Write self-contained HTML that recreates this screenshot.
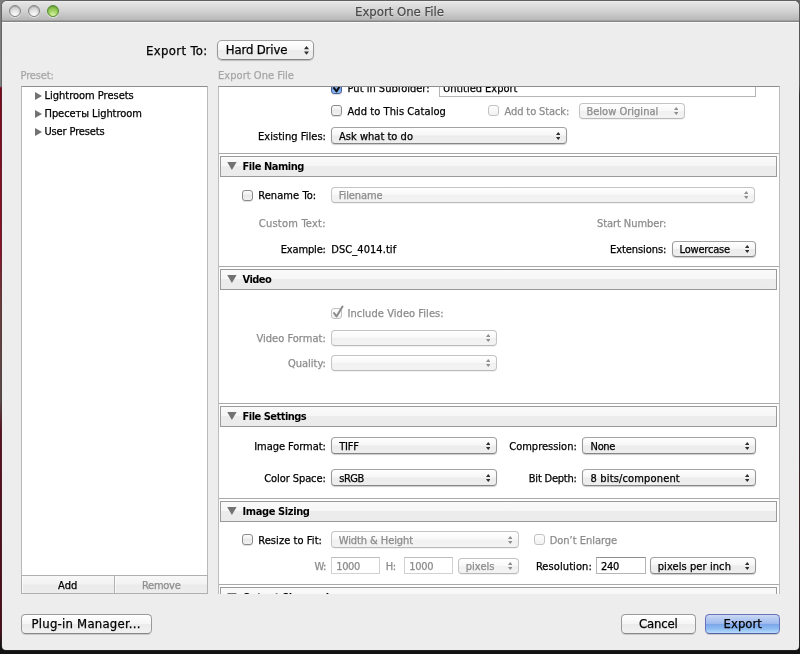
<!DOCTYPE html>
<html lang="en"><head><meta charset="utf-8"><title>Export One File</title>
<style>
html,body{margin:0;padding:0}
body{width:800px;height:654px;overflow:hidden;position:relative;background:#242022;font-family:"DejaVu Sans Condensed","Liberation Sans",sans-serif;font-size:11px}
#bgl{position:absolute;left:0;top:0;width:4px;height:654px;background:linear-gradient(180deg,#7c7c7c 0px,#808080 86px,#7a0a1e 88px,#86122a 250px,#6a3a3a 300px,#5a4a48 400px,#5c1020 430px,#4a0c18 630px,#141414 646px)}
#bgb{position:absolute;left:0;top:646px;width:800px;height:8px;background:#121212}
#bgr{position:absolute;left:796px;top:0;width:4px;height:654px;background:linear-gradient(180deg,#666 0px,#6a6a6a 85px,#2c2626 95px,#2a2424 400px,#3a1418 500px,#1a1414 646px)}
#bgt{position:absolute;left:0;top:0;width:800px;height:3px;background:#747474}
#win{position:absolute;left:2px;top:1px;width:796.5px;height:649px;background:#ededed;border-radius:5px 5px 4px 4px;overflow:hidden;box-shadow:0 0 0 1px rgba(60,60,60,.35)}
#tb{position:absolute;left:0;top:0;width:798px;height:21px;background:linear-gradient(180deg,#f0f0f0 0px,#e4e4e4 1.5px,#d2d2d2 10px,#b7b7b7 19px,#a0a0a0 19px,#a0a0a0 20px,#868686 20px,#868686 21px)}
#tbw{position:absolute;left:0;top:21px;width:798px;height:1px;background:#fafafa}
.tl{position:absolute;top:4px;width:12px;height:12px;border-radius:50%;box-sizing:border-box;border:1px solid #858585;background:radial-gradient(circle at 50% 90%,#fdfdfd 0%,#e6e6e6 40%,#c6c6c6 85%,#b8b8b8 100%);box-shadow:0 1px 0 rgba(255,255,255,.55),inset 0 1px 1px rgba(0,0,0,.18)}
.tl.g{border-color:#558f30;background:radial-gradient(circle at 50% 90%,#dcf5ad 0%,#a5d566 40%,#78b643 85%,#5f9f34 100%)}
.t{position:absolute;white-space:pre;line-height:16px;height:16px;font-size:11px;-webkit-text-stroke:0.25px}
.s13{font-size:13px}
.b{font-weight:bold;-webkit-text-stroke:0}
.ttl{text-shadow:0 1px 0 rgba(255,255,255,.6)}
.box{position:absolute;background:#fff;box-sizing:border-box;border:1px solid #b9b9b9;border-top-color:#8e8e8e}
#panel{position:absolute;left:218px;top:86px;width:562px;height:508px;background:#fff;box-sizing:border-box;border:1px solid #bcbcbc;border-top-color:#8e8e8e;border-bottom:0;overflow:hidden}
#pin{position:absolute;left:-219px;top:-87px;width:800px;height:700px}
.div{position:absolute;left:219px;width:560px;height:1px;background:#a9a9a9}
.hdr{position:absolute;left:220px;width:557px;height:21px;box-sizing:border-box;border:1px solid #9a9a9a;background:linear-gradient(180deg,#fafafa 0px,#f6f6f6 9px,#ececec 9px,#ebebeb 19px)}
.tri{position:absolute;left:6px;top:5px;display:block}
.rtri{position:absolute;width:0;height:0;border-top:4.25px solid transparent;border-bottom:4.25px solid transparent;border-left:7px solid #727272}
.pop{position:absolute;box-sizing:border-box;border:1px solid #979797;border-top-color:#a3a3a3;border-bottom-color:#858585;border-radius:4px;background:linear-gradient(180deg,#ffffff 0%,#f6f6f6 48%,#ececec 52%,#eeeeee 100%);box-shadow:0 1px 1px rgba(0,0,0,.2)}
.pop.dis{border-color:#c4c4c4;border-bottom-color:#b9b9b9;background:linear-gradient(180deg,#ffffff 0%,#f8f8f8 48%,#f1f1f1 52%,#f3f3f3 100%);box-shadow:0 1px 0 rgba(0,0,0,.05)}
.pop.big{border-radius:5px}
.ar{position:absolute;display:block}
.cb{position:absolute;width:11px;height:11px;box-sizing:border-box;border:1px solid #8a8a8a;border-radius:3px;background:linear-gradient(180deg,#fdfdfd 0%,#e9e9e9 55%,#f2f2f2 100%);box-shadow:0 1px 0 rgba(0,0,0,.12)}
.cb.dis{border-color:#c2c2c2;box-shadow:none;background:linear-gradient(180deg,#fdfdfd,#f1f1f1)}
.cb.on{border-color:#4a5f98;background:linear-gradient(180deg,#c8dcf8 0%,#6f9fe6 50%,#8fc0f5 100%)}
.cb.on.dis{border-color:#c2c2c2;background:linear-gradient(180deg,#fdfdfd,#f1f1f1)}
.fld{position:absolute;box-sizing:border-box;background:#fff;border:1px solid #b5b5b5;border-top-color:#8f8f8f}
.fld.dis{border-color:#d2d2d2;border-top-color:#bdbdbd}
.seg{position:absolute;top:575px;height:19px;box-sizing:border-box;border:1px solid #b0b0b0;background:linear-gradient(180deg,#f8f8f8 0%,#f2f2f2 48%,#eaeaea 52%,#ededed 100%);box-shadow:inset 1px 0 0 rgba(255,255,255,.7)}
.btn{position:absolute;top:614px;height:20px;box-sizing:border-box;border:1px solid #9a9a9a;border-bottom-color:#888;border-radius:4.5px;background:linear-gradient(180deg,#ffffff 0%,#f5f5f5 48%,#ebebeb 52%,#f1f1f1 100%);box-shadow:0 1px 0 rgba(0,0,0,.14)}
.btn.def{border-color:#6a72bd;border-bottom-color:#565ea6;background:linear-gradient(180deg,#cddaf5 0%,#bccef1 15%,#9ebbee 48%,#7ba6ea 52%,#8fbdf2 78%,#b9defb 100%)}
</style></head>
<body>
<div id="bgt"></div><div id="bgr"></div><div id="bgl"></div><div id="bgb"></div>
<div id="win">
<div id="shift" style="position:absolute;left:-2px;top:-1px;width:800px;height:654px;will-change:transform">
<div id="tb" style="left:2px;top:1px"></div><div id="tbw" style="left:2px;top:22px"></div>
<div class="tl" style="left:9px;top:5px"></div><div class="tl" style="left:27.5px;top:5px"></div><div class="tl g" style="left:46.5px;top:5px"></div>
<div class="box" style="left:21px;top:86px;width:187px;height:490px"></div>
<div class="seg" style="left:21px;width:94px"></div><div class="seg" style="left:114px;width:94px"></div>
<div class="btn" style="left:21px;width:131px"></div>
<div class="btn" style="left:621px;width:75px"></div>
<div class="btn def" style="left:705px;width:75px"></div>
<span class="t s13 ttl" style="top:4px;left:355px;color:#4a4a4a;letter-spacing:-0.001px">Export One File</span>
<span class="t s13" style="top:43px;left:146px;color:#000;letter-spacing:0.347px">Export To:</span>
<div class="pop big" style="left:217px;top:40px;width:97px;height:20px"><svg class="ar" width="5" height="9" viewBox="0 0 5 9" style="top:4.7px;right:4.4px"><path fill="#2e2e2e" d="M2.5 0L5 3.3H0ZM0 5.5H5L2.5 8.8Z"/></svg></div>
<span class="t s13" style="top:42px;left:225.75px;color:#000;letter-spacing:-0.138px">Hard Drive</span>
<span class="t" style="top:68px;left:20.5px;color:#a6a6a6;letter-spacing:-0.129px">Preset:</span>
<span class="t" style="top:68px;left:218px;color:#a6a6a6;letter-spacing:0.046px">Export One File</span>
<i class="rtri" style="left:35px;top:92px"></i>
<span class="t" style="top:88px;left:44.5px;color:#000;letter-spacing:-0.008px">Lightroom Presets</span>
<i class="rtri" style="left:35px;top:109.5px"></i>
<span class="t" style="top:106px;left:44.5px;color:#000;letter-spacing:-0.064px">Пресеты Lightroom</span>
<i class="rtri" style="left:35px;top:127.5px"></i>
<span class="t" style="top:124px;left:44.5px;color:#000;letter-spacing:-0.139px">User Presets</span>
<span class="t" style="top:578px;left:58px;color:#000;letter-spacing:0.081px">Add</span>
<span class="t" style="top:578px;left:142px;color:#8e8e8e;letter-spacing:-0.271px">Remove</span>
<span class="t s13" style="top:616px;left:31.5px;color:#000;letter-spacing:0.230px">Plug-in Manager...</span>
<span class="t s13" style="top:616px;left:639px;color:#000;letter-spacing:-0.157px">Cancel</span>
<span class="t s13" style="top:616px;left:723.5px;color:#000;letter-spacing:0.036px">Export</span>
<div id="panel"><div id="pin">
<div class="cb on" style="left:331px;top:83px"><svg width="14" height="14" viewBox="0 0 14 14" style="position:absolute;left:-1px;top:-4px"><path d="M3 8 L5.5 11.5 L11.5 1.5" fill="none" stroke="#111" stroke-width="2" stroke-linecap="round" stroke-linejoin="round"/></svg></div>
<span class="t" style="top:81px;left:347.6px;color:#000;letter-spacing:0.003px">Put in Subfolder:</span>
<div class="fld" style="left:439px;top:78px;width:317px;height:19px"></div>
<span class="t" style="top:81px;left:443px;color:#000;letter-spacing:-0.019px">Untitled Export</span>
<div class="cb" style="left:331px;top:105px"></div>
<span class="t" style="top:104px;left:347.6px;color:#000;letter-spacing:0.088px">Add to This Catalog</span>
<div class="cb dis" style="left:488px;top:105px"></div>
<span class="t" style="top:104px;left:504.5px;color:#8c8c8c;letter-spacing:-0.107px">Add to Stack:</span>
<div class="pop dis" style="left:579px;top:103px;width:106px;height:16px"><svg class="ar" width="4.5" height="8" viewBox="0 0 4.5 8" style="top:3px;right:5.65px"><path fill="#8e8e8e" d="M2.25 0L4.5 2.9H0ZM0 5H4.5L2.25 7.9Z"/></svg></div>
<span class="t" style="top:104px;left:586.4px;color:#8c8c8c;letter-spacing:0.017px">Below Original</span>
<span class="t" style="top:129px;left:258px;color:#000;letter-spacing:0.045px">Existing Files:</span>
<div class="pop" style="left:331px;top:127px;width:236px;height:17px"><svg class="ar" width="4.5" height="8" viewBox="0 0 4.5 8" style="top:4px;right:5.65px"><path fill="#2e2e2e" d="M2.25 0L4.5 2.9H0ZM0 5H4.5L2.25 7.9Z"/></svg></div>
<span class="t" style="top:129px;left:339px;color:#000;letter-spacing:0.023px">Ask what to do</span>
<div class="div" style="top:153px"></div>
<div class="hdr" style="top:156px"><svg class="tri" width="10" height="8" viewBox="0 0 10 8"><path fill="#727272" d="M0.2 0H9.6L4.9 8Z"/></svg></div>
<span class="t b" style="top:159px;left:242.5px;color:#000;letter-spacing:-0.455px">File Naming</span>
<div class="cb" style="left:242px;top:190px"></div>
<span class="t" style="top:188px;left:258.25px;color:#000;letter-spacing:0.075px">Rename To:</span>
<div class="pop dis" style="left:331px;top:187px;width:424px;height:16px"><svg class="ar" width="4.5" height="8" viewBox="0 0 4.5 8" style="top:3px;right:5.65px"><path fill="#8e8e8e" d="M2.25 0L4.5 2.9H0ZM0 5H4.5L2.25 7.9Z"/></svg></div>
<span class="t" style="top:188px;left:338.75px;color:#8c8c8c;letter-spacing:-0.102px">Filename</span>
<span class="t" style="top:216px;left:258.75px;color:#8c8c8c;letter-spacing:0.233px">Custom Text:</span>
<span class="t" style="top:216px;left:597px;color:#8c8c8c;letter-spacing:-0.075px">Start Number:</span>
<span class="t" style="top:242px;left:280.75px;color:#000;letter-spacing:-0.160px">Example:</span>
<span class="t" style="top:242px;left:331.25px;color:#000;letter-spacing:0.066px">DSC_4014.tif</span>
<span class="t" style="top:242px;left:610px;color:#000;letter-spacing:-0.075px">Extensions:</span>
<div class="pop" style="left:672px;top:241px;width:84px;height:16px"><svg class="ar" width="4.5" height="8" viewBox="0 0 4.5 8" style="top:3px;right:5.65px"><path fill="#2e2e2e" d="M2.25 0L4.5 2.9H0ZM0 5H4.5L2.25 7.9Z"/></svg></div>
<span class="t" style="top:242px;left:679.5px;color:#000;letter-spacing:-0.182px">Lowercase</span>
<div class="div" style="top:266px"></div>
<div class="hdr" style="top:269px"><svg class="tri" width="10" height="8" viewBox="0 0 10 8"><path fill="#727272" d="M0.2 0H9.6L4.9 8Z"/></svg></div>
<span class="t b" style="top:272px;left:242.5px;color:#000;letter-spacing:-0.541px">Video</span>
<div class="cb on dis" style="left:331px;top:308px"><svg width="14" height="14" viewBox="0 0 14 14" style="position:absolute;left:-1px;top:-4px"><path d="M3 8 L5.5 11.5 L11.5 1.5" fill="none" stroke="#8a8a8a" stroke-width="2" stroke-linecap="round" stroke-linejoin="round"/></svg></div>
<span class="t" style="top:306px;left:347.5px;color:#8c8c8c;letter-spacing:0.060px">Include Video Files:</span>
<span class="t" style="top:331px;left:256.5px;color:#8c8c8c;letter-spacing:0.019px">Video Format:</span>
<div class="pop dis" style="left:331px;top:330px;width:166px;height:16px"><svg class="ar" width="4.5" height="8" viewBox="0 0 4.5 8" style="top:3px;right:5.65px"><path fill="#8e8e8e" d="M2.25 0L4.5 2.9H0ZM0 5H4.5L2.25 7.9Z"/></svg></div>
<span class="t" style="top:356px;left:288px;color:#8c8c8c;letter-spacing:-0.020px">Quality:</span>
<div class="pop dis" style="left:331px;top:355px;width:166px;height:16px"><svg class="ar" width="4.5" height="8" viewBox="0 0 4.5 8" style="top:3px;right:5.65px"><path fill="#8e8e8e" d="M2.25 0L4.5 2.9H0ZM0 5H4.5L2.25 7.9Z"/></svg></div>
<div class="div" style="top:403px"></div>
<div class="hdr" style="top:406px"><svg class="tri" width="10" height="8" viewBox="0 0 10 8"><path fill="#727272" d="M0.2 0H9.6L4.9 8Z"/></svg></div>
<span class="t b" style="top:409px;left:242.5px;color:#000;letter-spacing:-0.513px">File Settings</span>
<span class="t" style="top:439px;left:254.25px;color:#000;letter-spacing:-0.061px">Image Format:</span>
<div class="pop" style="left:331px;top:437px;width:166px;height:17px"><svg class="ar" width="4.5" height="8" viewBox="0 0 4.5 8" style="top:4px;right:5.65px"><path fill="#2e2e2e" d="M2.25 0L4.5 2.9H0ZM0 5H4.5L2.25 7.9Z"/></svg></div>
<span class="t" style="top:439px;left:339.25px;color:#000;letter-spacing:-0.215px">TIFF</span>
<span class="t" style="top:439px;left:509.25px;color:#000;letter-spacing:-0.003px">Compression:</span>
<div class="pop" style="left:582px;top:437px;width:174px;height:17px"><svg class="ar" width="4.5" height="8" viewBox="0 0 4.5 8" style="top:4px;right:5.65px"><path fill="#2e2e2e" d="M2.25 0L4.5 2.9H0ZM0 5H4.5L2.25 7.9Z"/></svg></div>
<span class="t" style="top:439px;left:590.6px;color:#000;letter-spacing:-0.357px">None</span>
<span class="t" style="top:471px;left:264.25px;color:#000;letter-spacing:-0.082px">Color Space:</span>
<div class="pop" style="left:331px;top:469px;width:166px;height:17px"><svg class="ar" width="4.5" height="8" viewBox="0 0 4.5 8" style="top:4px;right:5.65px"><path fill="#2e2e2e" d="M2.25 0L4.5 2.9H0ZM0 5H4.5L2.25 7.9Z"/></svg></div>
<span class="t" style="top:471px;left:339.25px;color:#000;letter-spacing:-0.500px">sRGB</span>
<span class="t" style="top:471px;left:528.75px;color:#000;letter-spacing:-0.205px">Bit Depth:</span>
<div class="pop" style="left:582px;top:469px;width:174px;height:17px"><svg class="ar" width="4.5" height="8" viewBox="0 0 4.5 8" style="top:4px;right:5.65px"><path fill="#2e2e2e" d="M2.25 0L4.5 2.9H0ZM0 5H4.5L2.25 7.9Z"/></svg></div>
<span class="t" style="top:471px;left:590.6px;color:#000;letter-spacing:0.154px">8 bits/component</span>
<div class="div" style="top:498px"></div>
<div class="hdr" style="top:501px"><svg class="tri" width="10" height="8" viewBox="0 0 10 8"><path fill="#727272" d="M0.2 0H9.6L4.9 8Z"/></svg></div>
<span class="t b" style="top:504px;left:242.5px;color:#000;letter-spacing:-0.393px">Image Sizing</span>
<div class="cb" style="left:242px;top:534px"></div>
<span class="t" style="top:533px;left:258.25px;color:#000;letter-spacing:0.073px">Resize to Fit:</span>
<div class="pop dis tall" style="left:331px;top:531px;width:188px;height:17px"><svg class="ar" width="4.5" height="8" viewBox="0 0 4.5 8" style="top:4px;right:5.65px"><path fill="#8e8e8e" d="M2.25 0L4.5 2.9H0ZM0 5H4.5L2.25 7.9Z"/></svg></div>
<span class="t" style="top:533px;left:338.75px;color:#8c8c8c;letter-spacing:-0.086px">Width &amp; Height</span>
<div class="cb dis" style="left:534px;top:534px"></div>
<span class="t" style="top:533px;left:549.7px;color:#8c8c8c;letter-spacing:-0.016px">Don’t Enlarge</span>
<span class="t" style="top:559px;left:314.5px;color:#8c8c8c;letter-spacing:-0.617px">W:</span>
<div class="fld dis" style="left:331px;top:557px;width:49px;height:17px"></div>
<span class="t" style="top:559px;left:336.25px;color:#8c8c8c;letter-spacing:-0.359px">1000</span>
<span class="t" style="top:559px;left:385.75px;color:#8c8c8c;letter-spacing:-0.391px">H:</span>
<div class="fld dis" style="left:404px;top:557px;width:49px;height:17px"></div>
<span class="t" style="top:559px;left:409.25px;color:#8c8c8c;letter-spacing:-0.297px">1000</span>
<div class="pop dis" style="left:458px;top:558px;width:61px;height:16px"><svg class="ar" width="4.5" height="8" viewBox="0 0 4.5 8" style="top:3px;right:5.65px"><path fill="#8e8e8e" d="M2.25 0L4.5 2.9H0ZM0 5H4.5L2.25 7.9Z"/></svg></div>
<span class="t" style="top:559px;left:465.75px;color:#8c8c8c;letter-spacing:0.031px">pixels</span>
<span class="t" style="top:559px;left:535.9px;color:#000;letter-spacing:0.091px">Resolution:</span>
<div class="fld" style="left:596px;top:557px;width:50px;height:17px"></div>
<span class="t" style="top:559px;left:601px;color:#000;letter-spacing:-0.330px">240</span>
<div class="pop" style="left:650px;top:557px;width:106px;height:17px"><svg class="ar" width="4.5" height="8" viewBox="0 0 4.5 8" style="top:4px;right:5.65px"><path fill="#2e2e2e" d="M2.25 0L4.5 2.9H0ZM0 5H4.5L2.25 7.9Z"/></svg></div>
<span class="t" style="top:559px;left:657.7px;color:#000;letter-spacing:0.086px">pixels per inch</span>
<div class="div" style="top:584px"></div>
<div class="hdr" style="top:587px"><svg class="tri" width="10" height="8" viewBox="0 0 10 8"><path fill="#727272" d="M0.2 0H9.6L4.9 8Z"/></svg></div>
<span class="t b" style="top:590px;left:242.5px;color:#000;letter-spacing:-0.418px">Output Sharpening</span>
</div></div>
</div>
</div>
</body></html>
